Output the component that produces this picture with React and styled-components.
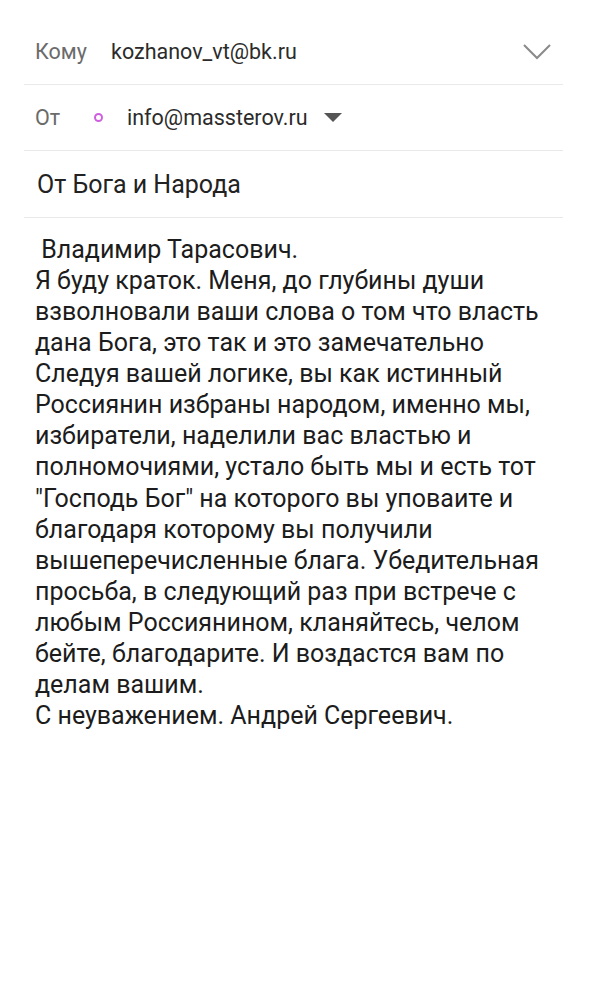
import React from "react";
import styled, { createGlobalStyle } from "styled-components";

const GlobalStyle = createGlobalStyle`
  body {
    margin: 0;
    background: #ffffff;
    font-family: Roboto, "Noto Sans", sans-serif;
  }
`;

const Screen = styled.div`
  width: 589px;
  min-height: 1000px;
  background: #ffffff;
  padding-top: 19px;
  box-sizing: border-box;
`;

const Header = styled.div`
  margin: 0 26px 0 24px;
`;

const Row = styled.div`
  display: flex;
  align-items: center;
  height: ${(p) => p.$height || 66}px;
  padding-left: 11px;
  padding-right: 12px;
  border-bottom: 1px solid #e9e9e9;
  box-sizing: border-box;
`;

const Label = styled.span`
  font-size: 21.5px;
  color: #6b6b6b;
  width: ${(p) => p.$width}px;
  flex-shrink: 0;
`;

const Address = styled.span`
  font-size: 21.5px;
  color: #2b2b2b;
`;

const Subject = styled.span`
  font-size: 25px;
  color: #222222;
  padding-left: 2px;
`;

const Dot = styled.span`
  width: 9px;
  height: 9px;
  border: 2px solid #cf5fe0;
  border-radius: 50%;
  box-sizing: border-box;
  margin-right: 24px;
`;

const Chevron = styled.svg`
  margin-left: auto;
  width: 28px;
  height: 16px;
`;

const Triangle = styled.span`
  width: 0;
  height: 0;
  margin-left: 16px;
  border-left: 9px solid transparent;
  border-right: 9px solid transparent;
  border-top: 9px solid #555555;
`;

const Body = styled.div`
  padding: 16px 24px 0 35px;
  font-size: 25px;
  line-height: 31.07px;
  color: #1c1c1c;
  white-space: pre;
`;

const lines = [
  " Владимир Тарасович.",
  "Я буду краток. Меня, до глубины души",
  "взволновали ваши слова о том что власть",
  "дана Бога, это так и это замечательно",
  "Следуя вашей логике, вы как истинный",
  "Россиянин избраны народом, именно мы,",
  "избиратели, наделили вас властью и",
  "полномочиями, устало быть мы и есть тот",
  "\"Господь Бог\" на которого вы уповаите и",
  "благодаря которому вы получили",
  "вышеперечисленные блага. Убедительная",
  "просьба, в следующий раз при встрече с",
  "любым Россиянином, кланяйтесь, челом",
  "бейте, благодарите. И воздастся вам по",
  "делам вашим.",
  "С неуважением. Андрей Сергеевич.",
];

export default function App() {
  return (
    <Screen>
      <GlobalStyle />
      <Header>
        <Row>
          <Label $width={76}>Кому</Label>
          <Address>kozhanov_vt@bk.ru</Address>
          <Chevron viewBox="0 0 28 16">
            <path d="M1 1 L14 14 L27 1" fill="none" stroke="#8a8a8a" strokeWidth="2" />
          </Chevron>
        </Row>
        <Row>
          <Label $width={59}>От</Label>
          <Dot />
          <Address>info@massterov.ru</Address>
          <Triangle />
        </Row>
        <Row $height={67}>
          <Subject>От Бога и Народа</Subject>
        </Row>
      </Header>
      <Body>{lines.join("\n")}</Body>
    </Screen>
  );
}
